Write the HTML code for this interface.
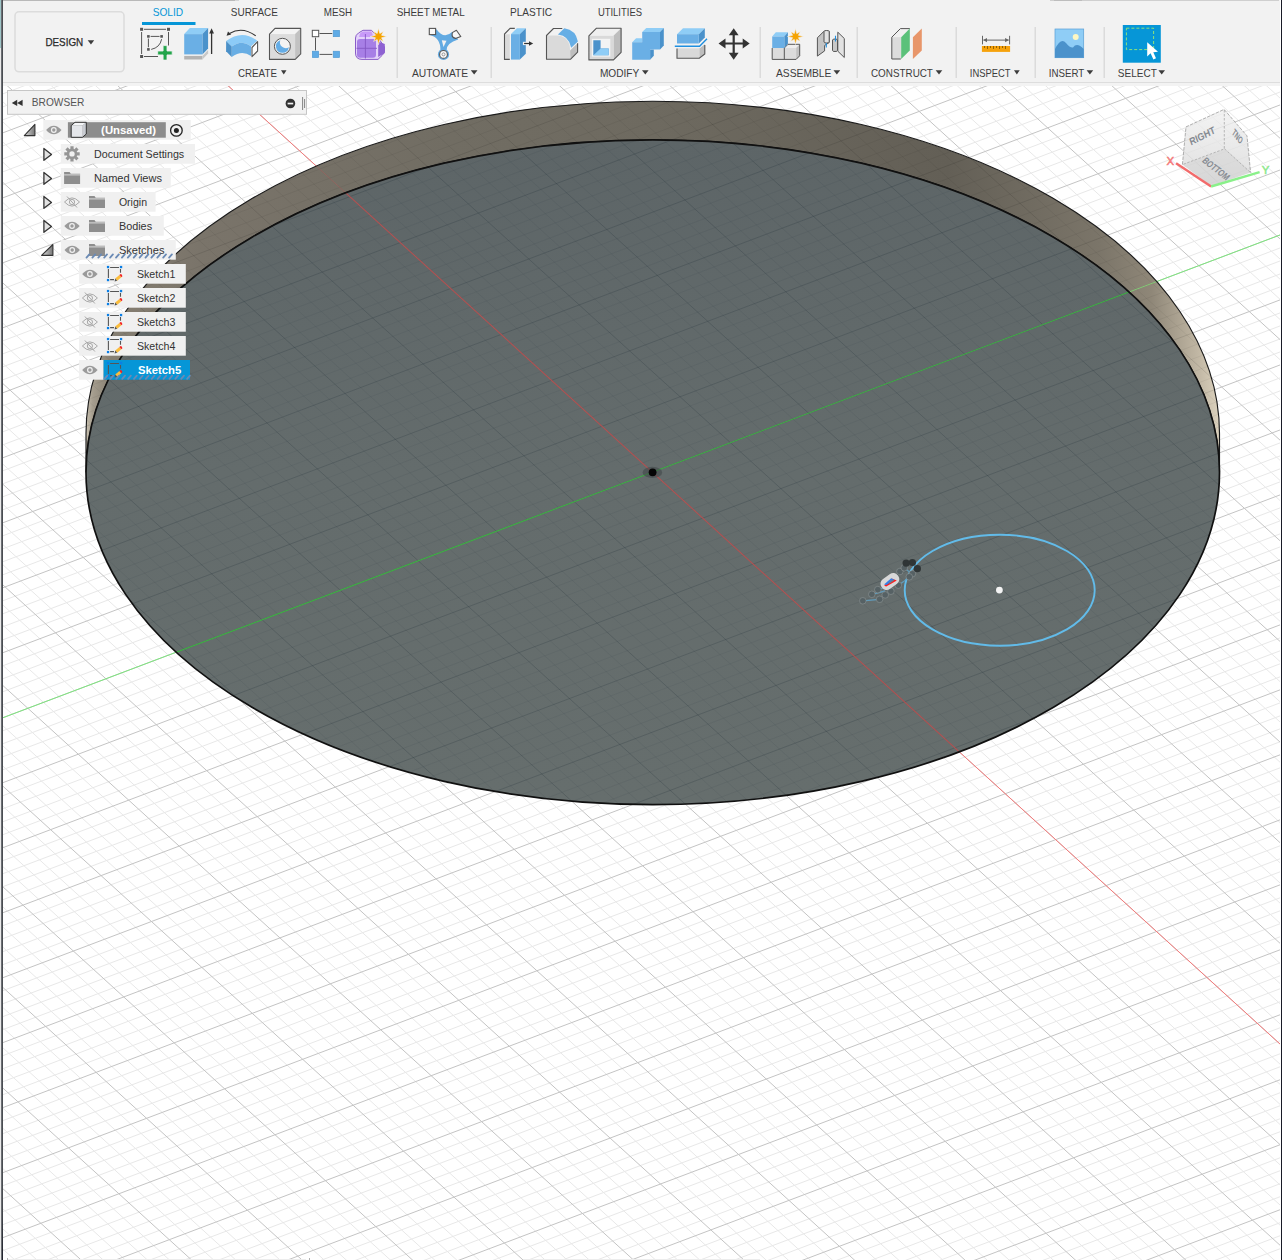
<!DOCTYPE html>
<html><head><meta charset="utf-8"><style>
html,body{margin:0;padding:0;width:1282px;height:1260px;overflow:hidden;background:#fff;}
</style></head><body>
<svg width="1282" height="1260" viewBox="0 0 1282 1260" style="position:absolute;left:0;top:0" font-family="Liberation Sans, sans-serif"><defs>
<linearGradient id="wallg" x1="86.0" y1="0" x2="1219.5" y2="0" gradientUnits="userSpaceOnUse">
<stop offset="0" stop-color="#c9c1b0"/><stop offset="0.006" stop-color="#a59d8e"/><stop offset="0.022" stop-color="#867f72"/><stop offset="0.1" stop-color="#7a746a"/><stop offset="0.32" stop-color="#716d63"/><stop offset="0.5" stop-color="#6e6a60"/><stop offset="0.76" stop-color="#635f56"/><stop offset="0.894" stop-color="#7b7569"/><stop offset="0.94" stop-color="#8f8778"/><stop offset="0.982" stop-color="#c2b8a5"/><stop offset="1" stop-color="#dcd2be"/>
</linearGradient>
<linearGradient id="faceg" x1="0" y1="139.85000000000002" x2="0" y2="804.65" gradientUnits="userSpaceOnUse">
<stop offset="0" stop-color="#5d6567"/><stop offset="0.5" stop-color="#646c6c"/><stop offset="1" stop-color="#666e6d"/>
</linearGradient>
<clipPath id="vp"><rect x="3" y="86" width="1277" height="1174"/></clipPath>
<clipPath id="facec"><ellipse cx="652.75" cy="472.25" rx="566.75" ry="332.4"/></clipPath>
<clipPath id="wallc"><path d="M86.0 472.2A566.75 332.4 0 0 1 1219.5 472.2L1219.5 433.6A566.75 332.4 0 0 0 86.0 433.6Z"/></clipPath>
</defs>
<g clip-path="url(#vp)">
<rect x="0" y="86" width="1282" height="1174" fill="#fff"/>
<path d="M-957.5 417.9L906.2 -286.6M-937.4 436.3L926.3 -268.2M-927.3 445.4L936.4 -259.0M-917.2 454.6L946.5 -249.8M-907.1 463.8L956.6 -240.7M-886.9 482.2L976.7 -222.3M-876.9 491.4L986.8 -213.1M-866.8 500.6L996.9 -203.9M-856.7 509.7L1007.0 -194.7M-836.5 528.1L1027.2 -176.4M-826.4 537.3L1037.2 -167.2M-816.4 546.5L1047.3 -158.0M-806.3 555.7L1057.4 -148.8M-786.1 574.0L1077.6 -130.4M-776.0 583.2L1087.7 -121.2M-765.9 592.4L1097.7 -112.1M-755.9 601.6L1107.8 -102.9M-735.7 620.0L1128.0 -84.5M-725.6 629.2L1138.1 -75.3M-715.5 638.3L1148.2 -66.1M-705.4 647.5L1158.2 -56.9M-685.3 665.9L1178.4 -38.6M-675.2 675.1L1188.5 -29.4M-665.1 684.3L1198.6 -20.2M-655.0 693.5L1208.7 -11.0M-634.9 711.8L1228.8 7.4M-624.8 721.0L1238.9 16.6M-614.7 730.2L1249.0 25.7M-604.6 739.4L1259.1 34.9M-584.4 757.8L1279.2 53.3M-574.4 767.0L1289.3 62.5M-564.3 776.1L1299.4 71.7M-554.2 785.3L1309.5 80.9M-534.0 803.7L1329.7 99.2M-523.9 812.9L1339.7 108.4M-513.9 822.1L1349.8 117.6M-503.8 831.3L1359.9 126.8M-483.6 849.6L1380.1 145.2M-473.5 858.8L1390.2 154.3M-463.4 868.0L1400.2 163.5M-453.4 877.2L1410.3 172.7M-433.2 895.6L1430.5 191.1M-423.1 904.7L1440.6 200.3M-413.0 913.9L1450.7 209.5M-402.9 923.1L1460.7 218.6M-382.8 941.5L1480.9 237.0M-372.7 950.7L1491.0 246.2M-362.6 959.9L1501.1 255.4M-352.5 969.0L1511.2 264.6M-332.4 987.4L1531.3 282.9M-322.3 996.6L1541.4 292.1M-312.2 1005.8L1551.5 301.3M-302.1 1015.0L1561.6 310.5M-281.9 1033.3L1581.7 328.9M-271.9 1042.5L1591.8 338.1M-261.8 1051.7L1601.9 347.2M-251.7 1060.9L1612.0 356.4M-231.5 1079.3L1632.1 374.8M-221.4 1088.5L1642.2 384.0M-211.4 1097.6L1652.3 393.2M-201.3 1106.8L1662.4 402.4M-181.1 1125.2L1682.6 420.7M-171.0 1134.4L1692.6 429.9M-160.9 1143.6L1702.7 439.1M-150.9 1152.8L1712.8 448.3M-130.7 1171.1L1733.0 466.7M-120.6 1180.3L1743.1 475.8M-110.5 1189.5L1753.1 485.0M-100.4 1198.7L1763.2 494.2M-80.3 1217.1L1783.4 512.6M-70.2 1226.2L1793.5 521.8M-60.1 1235.4L1803.6 531.0M-50.0 1244.6L1813.6 540.1M-29.9 1263.0L1833.8 558.5M-19.8 1272.2L1843.9 567.7M-9.7 1281.4L1854.0 576.9M0.4 1290.5L1864.1 586.1M20.6 1308.9L1884.2 604.4M30.6 1318.1L1894.3 613.6M40.7 1327.3L1904.4 622.8M50.8 1336.5L1914.5 632.0M71.0 1354.8L1934.6 650.4M81.1 1364.0L1944.7 659.6M91.1 1373.2L1954.8 668.7M101.2 1382.4L1964.9 677.9M121.4 1400.8L1985.1 696.3M131.5 1410.0L1995.1 705.5M141.5 1419.1L2005.2 714.7M151.6 1428.3L2015.3 723.9M171.8 1446.7L2035.5 742.2M181.9 1455.9L2045.6 751.4M192.0 1465.1L2055.6 760.6M202.0 1474.3L2065.7 769.8M222.2 1492.6L2085.9 788.2M232.3 1501.8L2096.0 797.3M242.4 1511.0L2106.1 806.5M252.5 1520.2L2116.1 815.7M272.6 1538.6L2136.3 834.1M282.7 1547.7L2146.4 843.3M292.8 1556.9L2156.5 852.5M302.9 1566.1L2166.6 861.6M323.0 1584.5L2186.7 880.0M333.1 1593.7L2196.8 889.2M343.2 1602.9L2206.9 898.4M353.3 1612.0L2217.0 907.6M373.5 1630.4L2237.1 925.9M-962.2 430.2L354.8 1630.0M-931.0 418.4L386.0 1618.2M-915.4 412.5L401.6 1612.3M-899.8 406.6L417.2 1606.4M-884.2 400.7L432.8 1600.5M-852.9 388.9L464.0 1588.7M-837.3 383.0L479.7 1582.8M-821.7 377.1L495.3 1576.9M-806.1 371.2L510.9 1571.0M-774.9 359.4L542.1 1559.2M-759.3 353.5L557.7 1553.3M-743.6 347.6L573.3 1547.4M-728.0 341.7L589.0 1541.5M-696.8 329.9L620.2 1529.7M-681.2 324.0L635.8 1523.8M-665.6 318.1L651.4 1517.9M-650.0 312.2L667.0 1512.0M-618.7 300.4L698.3 1500.2M-603.1 294.5L713.9 1494.3M-587.5 288.6L729.5 1488.3M-571.9 282.7L745.1 1482.4M-540.7 270.9L776.3 1470.6M-525.0 265.0L791.9 1464.7M-509.4 259.1L807.5 1458.8M-493.8 253.2L823.2 1452.9M-462.6 241.4L854.4 1441.1M-447.0 235.5L870.0 1435.2M-431.4 229.6L885.6 1429.3M-415.7 223.7L901.2 1423.4M-384.5 211.9L932.5 1411.6M-368.9 206.0L948.1 1405.7M-353.3 200.0L963.7 1399.8M-337.7 194.1L979.3 1393.9M-306.5 182.3L1010.5 1382.1M-290.8 176.4L1026.1 1376.2M-275.2 170.5L1041.8 1370.3M-259.6 164.6L1057.4 1364.4M-228.4 152.8L1088.6 1352.6M-212.8 146.9L1104.2 1346.7M-197.2 141.0L1119.8 1340.8M-181.5 135.1L1135.4 1334.9M-150.3 123.3L1166.7 1323.1M-134.7 117.4L1182.3 1317.2M-119.1 111.5L1197.9 1311.3M-103.5 105.6L1213.5 1305.4M-72.2 93.8L1244.7 1293.6M-56.6 87.9L1260.3 1287.7M-41.0 82.0L1276.0 1281.8M-25.4 76.1L1291.6 1275.9M5.8 64.3L1322.8 1264.1M21.4 58.4L1338.4 1258.2M37.1 52.5L1354.0 1252.3M52.7 46.6L1369.6 1246.4M83.9 34.8L1400.9 1234.6M99.5 28.9L1416.5 1228.7M115.1 23.0L1432.1 1222.8M130.7 17.1L1447.7 1216.9M162.0 5.3L1478.9 1205.1M177.6 -0.6L1494.6 1199.2M193.2 -6.5L1510.2 1193.2M208.8 -12.4L1525.8 1187.3M240.0 -24.2L1557.0 1175.5M255.6 -30.1L1572.6 1169.6M271.3 -36.0L1588.2 1163.7M286.9 -41.9L1603.9 1157.8M318.1 -53.7L1635.1 1146.0M333.7 -59.6L1650.7 1140.1M349.3 -65.5L1666.3 1134.2M364.9 -71.4L1681.9 1128.3M396.2 -83.2L1713.1 1116.5M411.8 -89.1L1728.8 1110.6M427.4 -95.1L1744.4 1104.7M443.0 -101.0L1760.0 1098.8M474.2 -112.8L1791.2 1087.0M489.8 -118.7L1806.8 1081.1M505.5 -124.6L1822.4 1075.2M521.1 -130.5L1838.1 1069.3M552.3 -142.3L1869.3 1057.5M567.9 -148.2L1884.9 1051.6M583.5 -154.1L1900.5 1045.7M599.1 -160.0L1916.1 1039.8M630.4 -171.8L1947.4 1028.0M646.0 -177.7L1963.0 1022.1M661.6 -183.6L1978.6 1016.2M677.2 -189.5L1994.2 1010.3M708.4 -201.3L2025.4 998.5M724.1 -207.2L2041.0 992.6M739.7 -213.1L2056.6 986.7M755.3 -219.0L2072.3 980.8M786.5 -230.8L2103.5 969.0M802.1 -236.7L2119.1 963.1M817.7 -242.6L2134.7 957.2M833.4 -248.5L2150.3 951.3M864.6 -260.3L2181.6 939.5M880.2 -266.2L2197.2 933.6M895.8 -272.1L2212.8 927.7M911.4 -278.0L2228.4 921.8" stroke="#e8e8e8" stroke-width="1" fill="none"/>
<path d="M-947.4 427.1L916.2 -277.4M-897.0 473.0L966.7 -231.5M-846.6 518.9L1017.1 -185.5M-796.2 564.9L1067.5 -139.6M-745.8 610.8L1117.9 -93.7M-695.4 656.7L1168.3 -47.7M-644.9 702.6L1218.7 -1.8M-594.5 748.6L1269.2 44.1M-544.1 794.5L1319.6 90.0M-493.7 840.4L1370.0 136.0M-443.3 886.4L1420.4 181.9M-392.9 932.3L1470.8 227.8M-342.4 978.2L1521.2 273.8M-292.0 1024.2L1571.7 319.7M-241.6 1070.1L1622.1 365.6M-191.2 1116.0L1672.5 411.5M-140.8 1161.9L1722.9 457.5M-90.4 1207.9L1773.3 503.4M-39.9 1253.8L1823.7 549.3M10.5 1299.7L1874.1 595.3M60.9 1345.7L1924.6 641.2M111.3 1391.6L1975.0 687.1M161.7 1437.5L2025.4 733.0M212.1 1483.4L2075.8 779.0M262.5 1529.4L2126.2 824.9M313.0 1575.3L2176.6 870.8M363.4 1621.2L2227.1 916.8M-946.6 424.3L370.4 1624.1M-868.5 394.8L448.4 1594.6M-790.5 365.3L526.5 1565.1M-712.4 335.8L604.6 1535.6M-634.3 306.3L682.6 1506.1M-556.3 276.8L760.7 1476.5M-478.2 247.3L838.8 1447.0M-400.1 217.8L916.8 1417.5M-322.1 188.2L994.9 1388.0M-244.0 158.7L1073.0 1358.5M-165.9 129.2L1151.1 1329.0M-87.9 99.7L1229.1 1299.5M-9.8 70.2L1307.2 1270.0M68.3 40.7L1385.3 1240.5M146.3 11.2L1463.3 1211.0M224.4 -18.3L1541.4 1181.4M302.5 -47.8L1619.5 1151.9M380.6 -77.3L1697.5 1122.4M458.6 -106.9L1775.6 1092.9M536.7 -136.4L1853.7 1063.4M614.8 -165.9L1931.7 1033.9M692.8 -195.4L2009.8 1004.4M770.9 -224.9L2087.9 974.9M849.0 -254.4L2165.9 945.4M927.0 -283.9L2244.0 915.9" stroke="#c4c4c4" stroke-width="1" fill="none"/>
<path d="M146.3 11.2L1463.3 1211.0" stroke="#f47a7a" stroke-width="1"/>
<path d="M-443.3 886.4L1420.4 181.9" stroke="#7ee67e" stroke-width="1"/>
<path d="M86.0 472.2A566.75 332.4 0 0 1 1219.5 472.2L1219.5 433.6A566.75 332.4 0 0 0 86.0 433.6Z" fill="url(#wallg)"/>
<g clip-path="url(#wallc)">
<path d="M-957.5 417.9L906.2 -286.6M-937.4 436.3L926.3 -268.2M-927.3 445.4L936.4 -259.0M-917.2 454.6L946.5 -249.8M-907.1 463.8L956.6 -240.7M-886.9 482.2L976.7 -222.3M-876.9 491.4L986.8 -213.1M-866.8 500.6L996.9 -203.9M-856.7 509.7L1007.0 -194.7M-836.5 528.1L1027.2 -176.4M-826.4 537.3L1037.2 -167.2M-816.4 546.5L1047.3 -158.0M-806.3 555.7L1057.4 -148.8M-786.1 574.0L1077.6 -130.4M-776.0 583.2L1087.7 -121.2M-765.9 592.4L1097.7 -112.1M-755.9 601.6L1107.8 -102.9M-735.7 620.0L1128.0 -84.5M-725.6 629.2L1138.1 -75.3M-715.5 638.3L1148.2 -66.1M-705.4 647.5L1158.2 -56.9M-685.3 665.9L1178.4 -38.6M-675.2 675.1L1188.5 -29.4M-665.1 684.3L1198.6 -20.2M-655.0 693.5L1208.7 -11.0M-634.9 711.8L1228.8 7.4M-624.8 721.0L1238.9 16.6M-614.7 730.2L1249.0 25.7M-604.6 739.4L1259.1 34.9M-584.4 757.8L1279.2 53.3M-574.4 767.0L1289.3 62.5M-564.3 776.1L1299.4 71.7M-554.2 785.3L1309.5 80.9M-534.0 803.7L1329.7 99.2M-523.9 812.9L1339.7 108.4M-513.9 822.1L1349.8 117.6M-503.8 831.3L1359.9 126.8M-483.6 849.6L1380.1 145.2M-473.5 858.8L1390.2 154.3M-463.4 868.0L1400.2 163.5M-453.4 877.2L1410.3 172.7M-433.2 895.6L1430.5 191.1M-423.1 904.7L1440.6 200.3M-413.0 913.9L1450.7 209.5M-402.9 923.1L1460.7 218.6M-382.8 941.5L1480.9 237.0M-372.7 950.7L1491.0 246.2M-362.6 959.9L1501.1 255.4M-352.5 969.0L1511.2 264.6M-332.4 987.4L1531.3 282.9M-322.3 996.6L1541.4 292.1M-312.2 1005.8L1551.5 301.3M-302.1 1015.0L1561.6 310.5M-281.9 1033.3L1581.7 328.9M-271.9 1042.5L1591.8 338.1M-261.8 1051.7L1601.9 347.2M-251.7 1060.9L1612.0 356.4M-231.5 1079.3L1632.1 374.8M-221.4 1088.5L1642.2 384.0M-211.4 1097.6L1652.3 393.2M-201.3 1106.8L1662.4 402.4M-181.1 1125.2L1682.6 420.7M-171.0 1134.4L1692.6 429.9M-160.9 1143.6L1702.7 439.1M-150.9 1152.8L1712.8 448.3M-130.7 1171.1L1733.0 466.7M-120.6 1180.3L1743.1 475.8M-110.5 1189.5L1753.1 485.0M-100.4 1198.7L1763.2 494.2M-80.3 1217.1L1783.4 512.6M-70.2 1226.2L1793.5 521.8M-60.1 1235.4L1803.6 531.0M-50.0 1244.6L1813.6 540.1M-29.9 1263.0L1833.8 558.5M-19.8 1272.2L1843.9 567.7M-9.7 1281.4L1854.0 576.9M0.4 1290.5L1864.1 586.1M20.6 1308.9L1884.2 604.4M30.6 1318.1L1894.3 613.6M40.7 1327.3L1904.4 622.8M50.8 1336.5L1914.5 632.0M71.0 1354.8L1934.6 650.4M81.1 1364.0L1944.7 659.6M91.1 1373.2L1954.8 668.7M101.2 1382.4L1964.9 677.9M121.4 1400.8L1985.1 696.3M131.5 1410.0L1995.1 705.5M141.5 1419.1L2005.2 714.7M151.6 1428.3L2015.3 723.9M171.8 1446.7L2035.5 742.2M181.9 1455.9L2045.6 751.4M192.0 1465.1L2055.6 760.6M202.0 1474.3L2065.7 769.8M222.2 1492.6L2085.9 788.2M232.3 1501.8L2096.0 797.3M242.4 1511.0L2106.1 806.5M252.5 1520.2L2116.1 815.7M272.6 1538.6L2136.3 834.1M282.7 1547.7L2146.4 843.3M292.8 1556.9L2156.5 852.5M302.9 1566.1L2166.6 861.6M323.0 1584.5L2186.7 880.0M333.1 1593.7L2196.8 889.2M343.2 1602.9L2206.9 898.4M353.3 1612.0L2217.0 907.6M373.5 1630.4L2237.1 925.9M-962.2 430.2L354.8 1630.0M-931.0 418.4L386.0 1618.2M-915.4 412.5L401.6 1612.3M-899.8 406.6L417.2 1606.4M-884.2 400.7L432.8 1600.5M-852.9 388.9L464.0 1588.7M-837.3 383.0L479.7 1582.8M-821.7 377.1L495.3 1576.9M-806.1 371.2L510.9 1571.0M-774.9 359.4L542.1 1559.2M-759.3 353.5L557.7 1553.3M-743.6 347.6L573.3 1547.4M-728.0 341.7L589.0 1541.5M-696.8 329.9L620.2 1529.7M-681.2 324.0L635.8 1523.8M-665.6 318.1L651.4 1517.9M-650.0 312.2L667.0 1512.0M-618.7 300.4L698.3 1500.2M-603.1 294.5L713.9 1494.3M-587.5 288.6L729.5 1488.3M-571.9 282.7L745.1 1482.4M-540.7 270.9L776.3 1470.6M-525.0 265.0L791.9 1464.7M-509.4 259.1L807.5 1458.8M-493.8 253.2L823.2 1452.9M-462.6 241.4L854.4 1441.1M-447.0 235.5L870.0 1435.2M-431.4 229.6L885.6 1429.3M-415.7 223.7L901.2 1423.4M-384.5 211.9L932.5 1411.6M-368.9 206.0L948.1 1405.7M-353.3 200.0L963.7 1399.8M-337.7 194.1L979.3 1393.9M-306.5 182.3L1010.5 1382.1M-290.8 176.4L1026.1 1376.2M-275.2 170.5L1041.8 1370.3M-259.6 164.6L1057.4 1364.4M-228.4 152.8L1088.6 1352.6M-212.8 146.9L1104.2 1346.7M-197.2 141.0L1119.8 1340.8M-181.5 135.1L1135.4 1334.9M-150.3 123.3L1166.7 1323.1M-134.7 117.4L1182.3 1317.2M-119.1 111.5L1197.9 1311.3M-103.5 105.6L1213.5 1305.4M-72.2 93.8L1244.7 1293.6M-56.6 87.9L1260.3 1287.7M-41.0 82.0L1276.0 1281.8M-25.4 76.1L1291.6 1275.9M5.8 64.3L1322.8 1264.1M21.4 58.4L1338.4 1258.2M37.1 52.5L1354.0 1252.3M52.7 46.6L1369.6 1246.4M83.9 34.8L1400.9 1234.6M99.5 28.9L1416.5 1228.7M115.1 23.0L1432.1 1222.8M130.7 17.1L1447.7 1216.9M162.0 5.3L1478.9 1205.1M177.6 -0.6L1494.6 1199.2M193.2 -6.5L1510.2 1193.2M208.8 -12.4L1525.8 1187.3M240.0 -24.2L1557.0 1175.5M255.6 -30.1L1572.6 1169.6M271.3 -36.0L1588.2 1163.7M286.9 -41.9L1603.9 1157.8M318.1 -53.7L1635.1 1146.0M333.7 -59.6L1650.7 1140.1M349.3 -65.5L1666.3 1134.2M364.9 -71.4L1681.9 1128.3M396.2 -83.2L1713.1 1116.5M411.8 -89.1L1728.8 1110.6M427.4 -95.1L1744.4 1104.7M443.0 -101.0L1760.0 1098.8M474.2 -112.8L1791.2 1087.0M489.8 -118.7L1806.8 1081.1M505.5 -124.6L1822.4 1075.2M521.1 -130.5L1838.1 1069.3M552.3 -142.3L1869.3 1057.5M567.9 -148.2L1884.9 1051.6M583.5 -154.1L1900.5 1045.7M599.1 -160.0L1916.1 1039.8M630.4 -171.8L1947.4 1028.0M646.0 -177.7L1963.0 1022.1M661.6 -183.6L1978.6 1016.2M677.2 -189.5L1994.2 1010.3M708.4 -201.3L2025.4 998.5M724.1 -207.2L2041.0 992.6M739.7 -213.1L2056.6 986.7M755.3 -219.0L2072.3 980.8M786.5 -230.8L2103.5 969.0M802.1 -236.7L2119.1 963.1M817.7 -242.6L2134.7 957.2M833.4 -248.5L2150.3 951.3M864.6 -260.3L2181.6 939.5M880.2 -266.2L2197.2 933.6M895.8 -272.1L2212.8 927.7M911.4 -278.0L2228.4 921.8" stroke="#000" stroke-opacity="0.05" stroke-width="1" fill="none"/>
<path d="M-947.4 427.1L916.2 -277.4M-897.0 473.0L966.7 -231.5M-846.6 518.9L1017.1 -185.5M-796.2 564.9L1067.5 -139.6M-745.8 610.8L1117.9 -93.7M-695.4 656.7L1168.3 -47.7M-644.9 702.6L1218.7 -1.8M-594.5 748.6L1269.2 44.1M-544.1 794.5L1319.6 90.0M-493.7 840.4L1370.0 136.0M-443.3 886.4L1420.4 181.9M-392.9 932.3L1470.8 227.8M-342.4 978.2L1521.2 273.8M-292.0 1024.2L1571.7 319.7M-241.6 1070.1L1622.1 365.6M-191.2 1116.0L1672.5 411.5M-140.8 1161.9L1722.9 457.5M-90.4 1207.9L1773.3 503.4M-39.9 1253.8L1823.7 549.3M10.5 1299.7L1874.1 595.3M60.9 1345.7L1924.6 641.2M111.3 1391.6L1975.0 687.1M161.7 1437.5L2025.4 733.0M212.1 1483.4L2075.8 779.0M262.5 1529.4L2126.2 824.9M313.0 1575.3L2176.6 870.8M363.4 1621.2L2227.1 916.8M-946.6 424.3L370.4 1624.1M-868.5 394.8L448.4 1594.6M-790.5 365.3L526.5 1565.1M-712.4 335.8L604.6 1535.6M-634.3 306.3L682.6 1506.1M-556.3 276.8L760.7 1476.5M-478.2 247.3L838.8 1447.0M-400.1 217.8L916.8 1417.5M-322.1 188.2L994.9 1388.0M-244.0 158.7L1073.0 1358.5M-165.9 129.2L1151.1 1329.0M-87.9 99.7L1229.1 1299.5M-9.8 70.2L1307.2 1270.0M68.3 40.7L1385.3 1240.5M146.3 11.2L1463.3 1211.0M224.4 -18.3L1541.4 1181.4M302.5 -47.8L1619.5 1151.9M380.6 -77.3L1697.5 1122.4M458.6 -106.9L1775.6 1092.9M536.7 -136.4L1853.7 1063.4M614.8 -165.9L1931.7 1033.9M692.8 -195.4L2009.8 1004.4M770.9 -224.9L2087.9 974.9M849.0 -254.4L2165.9 945.4M927.0 -283.9L2244.0 915.9" stroke="#000" stroke-opacity="0.10" stroke-width="1" fill="none"/>
<path d="M146.3 11.2L1463.3 1211.0" stroke="#e06a6a" stroke-width="1" stroke-opacity="0.35"/>
<path d="M-443.3 886.4L1420.4 181.9" stroke="#86e07a" stroke-width="1" stroke-opacity="0.8"/>
</g>
<path d="M86.0 472.2A566.75 332.4 0 0 1 1219.5 472.2L1219.5 433.6A566.75 332.4 0 0 0 86.0 433.6Z" fill="none" stroke="#1a1a1a" stroke-width="1.15"/>
<ellipse cx="652.75" cy="472.25" rx="566.75" ry="332.4" fill="url(#faceg)"/>
<g clip-path="url(#facec)">
<path d="M-957.5 417.9L906.2 -286.6M-937.4 436.3L926.3 -268.2M-927.3 445.4L936.4 -259.0M-917.2 454.6L946.5 -249.8M-907.1 463.8L956.6 -240.7M-886.9 482.2L976.7 -222.3M-876.9 491.4L986.8 -213.1M-866.8 500.6L996.9 -203.9M-856.7 509.7L1007.0 -194.7M-836.5 528.1L1027.2 -176.4M-826.4 537.3L1037.2 -167.2M-816.4 546.5L1047.3 -158.0M-806.3 555.7L1057.4 -148.8M-786.1 574.0L1077.6 -130.4M-776.0 583.2L1087.7 -121.2M-765.9 592.4L1097.7 -112.1M-755.9 601.6L1107.8 -102.9M-735.7 620.0L1128.0 -84.5M-725.6 629.2L1138.1 -75.3M-715.5 638.3L1148.2 -66.1M-705.4 647.5L1158.2 -56.9M-685.3 665.9L1178.4 -38.6M-675.2 675.1L1188.5 -29.4M-665.1 684.3L1198.6 -20.2M-655.0 693.5L1208.7 -11.0M-634.9 711.8L1228.8 7.4M-624.8 721.0L1238.9 16.6M-614.7 730.2L1249.0 25.7M-604.6 739.4L1259.1 34.9M-584.4 757.8L1279.2 53.3M-574.4 767.0L1289.3 62.5M-564.3 776.1L1299.4 71.7M-554.2 785.3L1309.5 80.9M-534.0 803.7L1329.7 99.2M-523.9 812.9L1339.7 108.4M-513.9 822.1L1349.8 117.6M-503.8 831.3L1359.9 126.8M-483.6 849.6L1380.1 145.2M-473.5 858.8L1390.2 154.3M-463.4 868.0L1400.2 163.5M-453.4 877.2L1410.3 172.7M-433.2 895.6L1430.5 191.1M-423.1 904.7L1440.6 200.3M-413.0 913.9L1450.7 209.5M-402.9 923.1L1460.7 218.6M-382.8 941.5L1480.9 237.0M-372.7 950.7L1491.0 246.2M-362.6 959.9L1501.1 255.4M-352.5 969.0L1511.2 264.6M-332.4 987.4L1531.3 282.9M-322.3 996.6L1541.4 292.1M-312.2 1005.8L1551.5 301.3M-302.1 1015.0L1561.6 310.5M-281.9 1033.3L1581.7 328.9M-271.9 1042.5L1591.8 338.1M-261.8 1051.7L1601.9 347.2M-251.7 1060.9L1612.0 356.4M-231.5 1079.3L1632.1 374.8M-221.4 1088.5L1642.2 384.0M-211.4 1097.6L1652.3 393.2M-201.3 1106.8L1662.4 402.4M-181.1 1125.2L1682.6 420.7M-171.0 1134.4L1692.6 429.9M-160.9 1143.6L1702.7 439.1M-150.9 1152.8L1712.8 448.3M-130.7 1171.1L1733.0 466.7M-120.6 1180.3L1743.1 475.8M-110.5 1189.5L1753.1 485.0M-100.4 1198.7L1763.2 494.2M-80.3 1217.1L1783.4 512.6M-70.2 1226.2L1793.5 521.8M-60.1 1235.4L1803.6 531.0M-50.0 1244.6L1813.6 540.1M-29.9 1263.0L1833.8 558.5M-19.8 1272.2L1843.9 567.7M-9.7 1281.4L1854.0 576.9M0.4 1290.5L1864.1 586.1M20.6 1308.9L1884.2 604.4M30.6 1318.1L1894.3 613.6M40.7 1327.3L1904.4 622.8M50.8 1336.5L1914.5 632.0M71.0 1354.8L1934.6 650.4M81.1 1364.0L1944.7 659.6M91.1 1373.2L1954.8 668.7M101.2 1382.4L1964.9 677.9M121.4 1400.8L1985.1 696.3M131.5 1410.0L1995.1 705.5M141.5 1419.1L2005.2 714.7M151.6 1428.3L2015.3 723.9M171.8 1446.7L2035.5 742.2M181.9 1455.9L2045.6 751.4M192.0 1465.1L2055.6 760.6M202.0 1474.3L2065.7 769.8M222.2 1492.6L2085.9 788.2M232.3 1501.8L2096.0 797.3M242.4 1511.0L2106.1 806.5M252.5 1520.2L2116.1 815.7M272.6 1538.6L2136.3 834.1M282.7 1547.7L2146.4 843.3M292.8 1556.9L2156.5 852.5M302.9 1566.1L2166.6 861.6M323.0 1584.5L2186.7 880.0M333.1 1593.7L2196.8 889.2M343.2 1602.9L2206.9 898.4M353.3 1612.0L2217.0 907.6M373.5 1630.4L2237.1 925.9M-962.2 430.2L354.8 1630.0M-931.0 418.4L386.0 1618.2M-915.4 412.5L401.6 1612.3M-899.8 406.6L417.2 1606.4M-884.2 400.7L432.8 1600.5M-852.9 388.9L464.0 1588.7M-837.3 383.0L479.7 1582.8M-821.7 377.1L495.3 1576.9M-806.1 371.2L510.9 1571.0M-774.9 359.4L542.1 1559.2M-759.3 353.5L557.7 1553.3M-743.6 347.6L573.3 1547.4M-728.0 341.7L589.0 1541.5M-696.8 329.9L620.2 1529.7M-681.2 324.0L635.8 1523.8M-665.6 318.1L651.4 1517.9M-650.0 312.2L667.0 1512.0M-618.7 300.4L698.3 1500.2M-603.1 294.5L713.9 1494.3M-587.5 288.6L729.5 1488.3M-571.9 282.7L745.1 1482.4M-540.7 270.9L776.3 1470.6M-525.0 265.0L791.9 1464.7M-509.4 259.1L807.5 1458.8M-493.8 253.2L823.2 1452.9M-462.6 241.4L854.4 1441.1M-447.0 235.5L870.0 1435.2M-431.4 229.6L885.6 1429.3M-415.7 223.7L901.2 1423.4M-384.5 211.9L932.5 1411.6M-368.9 206.0L948.1 1405.7M-353.3 200.0L963.7 1399.8M-337.7 194.1L979.3 1393.9M-306.5 182.3L1010.5 1382.1M-290.8 176.4L1026.1 1376.2M-275.2 170.5L1041.8 1370.3M-259.6 164.6L1057.4 1364.4M-228.4 152.8L1088.6 1352.6M-212.8 146.9L1104.2 1346.7M-197.2 141.0L1119.8 1340.8M-181.5 135.1L1135.4 1334.9M-150.3 123.3L1166.7 1323.1M-134.7 117.4L1182.3 1317.2M-119.1 111.5L1197.9 1311.3M-103.5 105.6L1213.5 1305.4M-72.2 93.8L1244.7 1293.6M-56.6 87.9L1260.3 1287.7M-41.0 82.0L1276.0 1281.8M-25.4 76.1L1291.6 1275.9M5.8 64.3L1322.8 1264.1M21.4 58.4L1338.4 1258.2M37.1 52.5L1354.0 1252.3M52.7 46.6L1369.6 1246.4M83.9 34.8L1400.9 1234.6M99.5 28.9L1416.5 1228.7M115.1 23.0L1432.1 1222.8M130.7 17.1L1447.7 1216.9M162.0 5.3L1478.9 1205.1M177.6 -0.6L1494.6 1199.2M193.2 -6.5L1510.2 1193.2M208.8 -12.4L1525.8 1187.3M240.0 -24.2L1557.0 1175.5M255.6 -30.1L1572.6 1169.6M271.3 -36.0L1588.2 1163.7M286.9 -41.9L1603.9 1157.8M318.1 -53.7L1635.1 1146.0M333.7 -59.6L1650.7 1140.1M349.3 -65.5L1666.3 1134.2M364.9 -71.4L1681.9 1128.3M396.2 -83.2L1713.1 1116.5M411.8 -89.1L1728.8 1110.6M427.4 -95.1L1744.4 1104.7M443.0 -101.0L1760.0 1098.8M474.2 -112.8L1791.2 1087.0M489.8 -118.7L1806.8 1081.1M505.5 -124.6L1822.4 1075.2M521.1 -130.5L1838.1 1069.3M552.3 -142.3L1869.3 1057.5M567.9 -148.2L1884.9 1051.6M583.5 -154.1L1900.5 1045.7M599.1 -160.0L1916.1 1039.8M630.4 -171.8L1947.4 1028.0M646.0 -177.7L1963.0 1022.1M661.6 -183.6L1978.6 1016.2M677.2 -189.5L1994.2 1010.3M708.4 -201.3L2025.4 998.5M724.1 -207.2L2041.0 992.6M739.7 -213.1L2056.6 986.7M755.3 -219.0L2072.3 980.8M786.5 -230.8L2103.5 969.0M802.1 -236.7L2119.1 963.1M817.7 -242.6L2134.7 957.2M833.4 -248.5L2150.3 951.3M864.6 -260.3L2181.6 939.5M880.2 -266.2L2197.2 933.6M895.8 -272.1L2212.8 927.7M911.4 -278.0L2228.4 921.8" stroke="#1c2a33" stroke-opacity="0.07" stroke-width="1" fill="none"/>
<path d="M-947.4 427.1L916.2 -277.4M-897.0 473.0L966.7 -231.5M-846.6 518.9L1017.1 -185.5M-796.2 564.9L1067.5 -139.6M-745.8 610.8L1117.9 -93.7M-695.4 656.7L1168.3 -47.7M-644.9 702.6L1218.7 -1.8M-594.5 748.6L1269.2 44.1M-544.1 794.5L1319.6 90.0M-493.7 840.4L1370.0 136.0M-443.3 886.4L1420.4 181.9M-392.9 932.3L1470.8 227.8M-342.4 978.2L1521.2 273.8M-292.0 1024.2L1571.7 319.7M-241.6 1070.1L1622.1 365.6M-191.2 1116.0L1672.5 411.5M-140.8 1161.9L1722.9 457.5M-90.4 1207.9L1773.3 503.4M-39.9 1253.8L1823.7 549.3M10.5 1299.7L1874.1 595.3M60.9 1345.7L1924.6 641.2M111.3 1391.6L1975.0 687.1M161.7 1437.5L2025.4 733.0M212.1 1483.4L2075.8 779.0M262.5 1529.4L2126.2 824.9M313.0 1575.3L2176.6 870.8M363.4 1621.2L2227.1 916.8M-946.6 424.3L370.4 1624.1M-868.5 394.8L448.4 1594.6M-790.5 365.3L526.5 1565.1M-712.4 335.8L604.6 1535.6M-634.3 306.3L682.6 1506.1M-556.3 276.8L760.7 1476.5M-478.2 247.3L838.8 1447.0M-400.1 217.8L916.8 1417.5M-322.1 188.2L994.9 1388.0M-244.0 158.7L1073.0 1358.5M-165.9 129.2L1151.1 1329.0M-87.9 99.7L1229.1 1299.5M-9.8 70.2L1307.2 1270.0M68.3 40.7L1385.3 1240.5M146.3 11.2L1463.3 1211.0M224.4 -18.3L1541.4 1181.4M302.5 -47.8L1619.5 1151.9M380.6 -77.3L1697.5 1122.4M458.6 -106.9L1775.6 1092.9M536.7 -136.4L1853.7 1063.4M614.8 -165.9L1931.7 1033.9M692.8 -195.4L2009.8 1004.4M770.9 -224.9L2087.9 974.9M849.0 -254.4L2165.9 945.4M927.0 -283.9L2244.0 915.9" stroke="#1c2a33" stroke-opacity="0.21" stroke-width="1" fill="none"/>
<path d="M146.3 11.2L1463.3 1211.0" stroke="#b35353" stroke-width="1.1"/>
<path d="M-443.3 886.4L1420.4 181.9" stroke="#3fb045" stroke-width="1.1"/>
</g>
<ellipse cx="652.75" cy="472.25" rx="566.75" ry="332.4" fill="none" stroke="#101010" stroke-width="1.7"/>
</g>
<rect x="0" y="0" width="1282" height="83" fill="#f2f2f2"/>
<rect x="0" y="82" width="1280" height="1" fill="#dddddd"/>
<rect x="0" y="83" width="1280" height="3" fill="#f3f3f3"/>
<rect x="3" y="0" width="232" height="1" fill="#b9b9b9"/><rect x="235" y="0" width="4" height="1" fill="#d6d6d6"/>
<rect x="1050" y="0" width="229" height="1" fill="#cfcfcf"/><rect x="1054" y="0" width="28" height="1" fill="#bdbdbd"/>
<rect x="15" y="11.8" width="109" height="60" rx="4" fill="#f2f2f2" stroke="#dcdcdc" stroke-width="1.6"/>
<text x="45.4" y="46" font-size="11" font-weight="400" fill="#2a2a2a" textLength="37.8" lengthAdjust="spacingAndGlyphs" stroke="#2a2a2a" stroke-width="0.25">DESIGN</text>
<path d="M87.7 40.3H94.19999999999999L90.94999999999999 44.4Z" fill="#3c3c3c"/>
<text x="152.7" y="16.2" font-size="11" font-weight="400" fill="#0696d7" textLength="30.5" lengthAdjust="spacingAndGlyphs" >SOLID</text>
<rect x="142" y="22" width="53.5" height="3" fill="#0696d7"/>
<text x="230.8" y="16.2" font-size="11" font-weight="400" fill="#3c3c3c" textLength="47.1" lengthAdjust="spacingAndGlyphs" >SURFACE</text>
<text x="323.7" y="16.2" font-size="11" font-weight="400" fill="#3c3c3c" textLength="28.4" lengthAdjust="spacingAndGlyphs" >MESH</text>
<text x="396.7" y="16.2" font-size="11" font-weight="400" fill="#3c3c3c" textLength="68.0" lengthAdjust="spacingAndGlyphs" >SHEET METAL</text>
<text x="509.9" y="16.2" font-size="11" font-weight="400" fill="#3c3c3c" textLength="42.2" lengthAdjust="spacingAndGlyphs" >PLASTIC</text>
<text x="597.9" y="16.2" font-size="11" font-weight="400" fill="#3c3c3c" textLength="44.1" lengthAdjust="spacingAndGlyphs" >UTILITIES</text>
<text x="238.0" y="76.9" font-size="11" font-weight="400" fill="#3c3c3c" textLength="38.9" lengthAdjust="spacingAndGlyphs" >CREATE</text>
<path d="M281.0 70.3H286.5L283.75 74.4Z" fill="#3c3c3c"/>
<text x="412.0" y="76.9" font-size="11" font-weight="400" fill="#3c3c3c" textLength="56.1" lengthAdjust="spacingAndGlyphs" >AUTOMATE</text>
<path d="M470.79999999999995 70.3H477.5L474.15 74.4Z" fill="#3c3c3c"/>
<text x="599.9" y="76.9" font-size="11" font-weight="400" fill="#3c3c3c" textLength="39.3" lengthAdjust="spacingAndGlyphs" >MODIFY</text>
<path d="M642.0 70.3H648.6L645.3 74.4Z" fill="#3c3c3c"/>
<text x="775.9" y="76.9" font-size="11" font-weight="400" fill="#3c3c3c" textLength="55.6" lengthAdjust="spacingAndGlyphs" >ASSEMBLE</text>
<path d="M833.5 70.3H840.2L836.85 74.4Z" fill="#3c3c3c"/>
<text x="871.0" y="76.9" font-size="11" font-weight="400" fill="#3c3c3c" textLength="61.9" lengthAdjust="spacingAndGlyphs" >CONSTRUCT</text>
<path d="M935.6999999999999 70.3H942.3000000000001L939.0 74.4Z" fill="#3c3c3c"/>
<text x="969.8" y="76.9" font-size="11" font-weight="400" fill="#3c3c3c" textLength="40.8" lengthAdjust="spacingAndGlyphs" >INSPECT</text>
<path d="M1014.0 70.3H1019.7L1016.85 74.4Z" fill="#3c3c3c"/>
<text x="1048.7" y="76.9" font-size="11" font-weight="400" fill="#3c3c3c" textLength="35.5" lengthAdjust="spacingAndGlyphs" >INSERT</text>
<path d="M1086.6000000000001 70.3H1093.1999999999998L1089.9 74.4Z" fill="#3c3c3c"/>
<text x="1117.8" y="76.9" font-size="11" font-weight="400" fill="#3c3c3c" textLength="39.0" lengthAdjust="spacingAndGlyphs" >SELECT</text>
<path d="M1158.4 70.3H1165.0L1161.7 74.4Z" fill="#3c3c3c"/>
<rect x="396.5" y="27" width="1.4" height="51" fill="#d9d9d9"/>
<rect x="490.5" y="27" width="1.4" height="51" fill="#d9d9d9"/>
<rect x="759.5" y="27" width="1.4" height="51" fill="#d9d9d9"/>
<rect x="856.5" y="27" width="1.4" height="51" fill="#d9d9d9"/>
<rect x="955.5" y="27" width="1.4" height="51" fill="#d9d9d9"/>
<rect x="1034.5" y="27" width="1.4" height="51" fill="#d9d9d9"/>
<rect x="1103.5" y="27" width="1.4" height="51" fill="#d9d9d9"/>
<rect x="140.1" y="27.8" width="3" height="3" fill="#555"/><rect x="167.0" y="27.8" width="3" height="3" fill="#555"/><rect x="140.1" y="55.0" width="3" height="3" fill="#555"/><rect x="147.1" y="35.1" width="2.6" height="2.6" fill="#555"/><rect x="160.29999999999998" y="35.1" width="2.6" height="2.6" fill="#555"/><rect x="147.1" y="48.1" width="2.6" height="2.6" fill="#555"/><path d="M144 29.3H166M141.6 32V54M144 56.5H158M168.5 32V45.5M150.6 36.4H159.5M148.4 38.6V47.2M161.6 39.2Q160 47.5 151.2 49.4" stroke="#555" stroke-width="1" fill="none"/><path d="M163.1 45.6h3.9v5.4h5.2v3.9h-5.2v5.2h-3.9v-5.2h-5.4v-3.9h5.4z" fill="#23a54b" stroke="#f2f2f2" stroke-width="0.8"/><path d="M184.2 34.1L189.9 28.1L208.1 28.1L202.4 34.1Z" fill="#8fcdf6"/><path d="M202.4 34.1L208.1 28.1L208.1 48.4L202.4 54.4Z" fill="#4b92cb"/><path d="M184.2 34.1L202.4 34.1L202.4 54.4L184.2 54.4Z" fill="#6aafe5"/><path d="M184.2 55.9L202.4 55.9L202.4 59.5L184.2 59.5Z" fill="#b3b3b3"/><path d="M202.4 55.9L208.1 50.0L208.1 53.6L202.4 59.5Z" fill="#c8c8c8"/><path d="M211.6 54V32" stroke="#333" stroke-width="1.3"/><path d="M209.2 33.5L211.6 28.3L214 33.5Z" fill="#333"/><path d="M226.1 41Q242 29 257.3 40.7L251 46.3Q242 39 231.7 46.6Z" fill="#8ccbf7"/><path d="M231.7 46.6Q242 39 251 46.3L251 56Q242 49.5 231.7 56.9Z" fill="#69aee4"/><path d="M226.1 41L231.7 46.6V56.9L226.1 51.3Z" fill="#4a90c8"/><path d="M252 47.5L257.6 41.6V51L252 56.6Z" fill="#fff" stroke="#555" stroke-width="1.1" stroke-linejoin="round"/><path d="M255.7 35.7Q242 26 229.5 33.5" stroke="#333" stroke-width="1.1" fill="none"/><path d="M226.6 35.8L228 31.6L231.2 34.4Z" fill="#333"/><path d="M270.1 34.1L275.1 29.1L300.1 29.1L295.1 34.1Z" fill="#f4f4f4"/><path d="M270.1 34.1L295.1 34.1L295.1 58.9L270.1 58.9Z" fill="#dcdcdc"/><path d="M295.1 34.1L300.1 29.1L300.1 53.7L295.1 58.9Z" fill="#c2c2c2"/><path d="M269.5 34.1L275.0 28.4L300.7 28.4L300.7 53.9L295.2 59.4L269.5 59.4Z" fill="none" stroke="#555" stroke-width="1.1" stroke-linejoin="round"/><circle cx="282.4" cy="46.3" r="8" fill="#f4f4f4" stroke="#555" stroke-width="1"/><path d="M280.3 40.2A6.5 6.5 0 1 0 288.9 47.3A5.9 5.9 0 0 1 280.3 40.2Z" fill="#65ade6"/><path d="M319.5 33.5H332.3M315.5 37.6V50.4M319.5 54.4H332.3" stroke="#555" stroke-width="1"/><rect x="312.3" y="30.3" width="6.4" height="6.4" fill="#fff" stroke="#555" stroke-width="1"/><rect x="333.2" y="30.3" width="6.4" height="6.4" fill="#5fabe6" stroke="#4a95d0" stroke-width="0.6"/><rect x="312.3" y="51.2" width="6.4" height="6.4" fill="#5fabe6" stroke="#4a95d0" stroke-width="0.6"/><rect x="333.2" y="51.2" width="6.4" height="6.4" fill="#5fabe6" stroke="#4a95d0" stroke-width="0.6"/><path d="M363 30.3H371.5Q374 33 377 36L384.5 47V51Q384.5 53 382 55.5L378 59.4H362Q355.5 59.4 355.5 53V38Q355.5 35 358.5 33Z" fill="#e4d3fa" stroke="#8a5cc8" stroke-width="1"/><path d="M360 33.5Q362 31.5 364 31.5H371.5L373.5 37H359Z" fill="#c89af8"/><rect x="357" y="39.1" width="19" height="18.7" rx="3" fill="#a77fe6"/><path d="M378.2 41.5L384.8 44V53L378.2 57Z" fill="#8e62d2"/><path d="M365.4 34V58.5M356.5 48.3H377" stroke="#8558c4" stroke-width="0.9"/><path d="M378.5 28.3L379.8 33.5L383.4 31.6L381.5 35.2L386.7 36.5L381.5 37.8L383.4 41.4L379.8 39.5L378.5 44.7L377.2 39.5L373.6 41.4L375.5 37.8L370.3 36.5L375.5 35.2L373.6 31.6L377.2 33.5Z" fill="#f5a300" stroke="#f2f2f2" stroke-width="0.6" stroke-linejoin="round"/><path d="M430.2 35.2Q440.5 37.5 440.5 50.5L446.5 50.5Q446.5 43 458.2 39.6L452.3 31.8Q444 40 436.5 29.3Z" fill="#62aae2"/><circle cx="443.5" cy="54.4" r="5.6" fill="#62aae2"/><path d="M441.8 40.2L446.5 40.8L443.5 47.1Z" fill="#f2f2f2"/><rect x="429.3" y="28.4" width="6.3" height="6.2" fill="#f8f8f8" stroke="#555" stroke-width="1.1"/><path d="M456.4 30.2L460.8 36.5L455.5 38.4Q452 37.5 452.1 35.2Q452 33 452.7 32.4Z" fill="#f8f8f8" stroke="#555" stroke-width="1.1" stroke-linejoin="round"/><circle cx="443.5" cy="54.4" r="3.9" fill="#f8f8f8" stroke="#555" stroke-width="1.1"/><circle cx="443.5" cy="54.4" r="1.5" fill="none" stroke="#777" stroke-width="0.7"/><path d="M505.1 34.3L510.3 29.0L514.8 29.0L509.8 34.3Z" fill="#f2f2f2"/><rect x="505.1" y="34.3" width="4.7" height="24.8" fill="#dadada"/><path d="M514.8 28.4H510.1L504.5 34V59.4H509.8" fill="none" stroke="#555" stroke-width="1.1"/><path d="M511.0 34.1L516.9 28.2L525.8 28.2L519.9 34.1Z" fill="#8fcdf6"/><path d="M519.9 34.1L525.8 28.2L525.8 53.7L519.9 59.6Z" fill="#4b92cb"/><path d="M511.0 34.1L519.9 34.1L519.9 59.6L511.0 59.6Z" fill="#6aafe5"/><rect x="522.9" y="41.8" width="3" height="3.3" fill="#f2f2f2"/><path d="M524.1 43.5H530" stroke="#333" stroke-width="1.2"/><path d="M529 41.2L533.2 43.5L529 45.8Z" fill="#333"/><path d="M546.5 35.5L553.5 28.5H564.3L557.9 34.6Z" fill="#f2f2f2"/><path d="M546.5 35.5H557.9Q570 37 570.1 50.5V59.3H546.5Z" fill="#dadada"/><path d="M570.1 50.5L577.6 43.3V52.1L570.4 59.3Z" fill="#bebebe"/><path d="M557.9 34.6L564.3 28.2Q576 30 577.9 41.6L571.2 47.7Q569 36 557.9 34.6Z" fill="#66aee5"/><path d="M562.3 28.5H553.5L546.5 35.5V59.3H570.4L577.6 52.1V43.3" fill="none" stroke="#555" stroke-width="1.1" stroke-linejoin="round"/><path d="M588.9 35.8L596.5 28.2L621.1 28.2L613.5 35.8Z" fill="#efefef"/><path d="M613.5 35.8L621.1 28.2L621.1 52.3L613.5 59.9Z" fill="#bdbdbd"/><path d="M588.9 35.8L613.5 35.8L613.5 59.9L588.9 59.9Z" fill="#d9d9d9"/><path d="M588.9 35.8L596.5 28.2L621.1 28.2L621.1 52.3L613.5 59.9L588.9 59.9Z" fill="none" stroke="#555555" stroke-width="1.1" stroke-linejoin="round"/><rect x="591.8" y="38.8" width="18.5" height="17.8" fill="#f4f4f4"/><path d="M593.3 40.3H600.6V48.4H608.7V55.3H593.3Z" fill="#4b92cb"/><path d="M593.3 55.3L600.6 48.4H608.7V55.3Z" fill="#8fcdf6"/><path d="M642.2 32.1L646.3 28.1L663.8 28.1L660.0 32.1Z" fill="#8fcdf6"/><path d="M632.2 42.2L636.1 38.3L642.2 38.3L642.2 42.2Z" fill="#8fcdf6"/><path d="M660.0 32.1L663.8 28.1L663.8 45.5L660.0 49.4Z" fill="#4b92cb"/><path d="M650.1 49.4L653.8 49.4L653.8 55.8L650.1 59.7Z" fill="#4b92cb"/><path d="M632.2 42.2L642.2 42.2L642.2 32.1L660.0 32.1L660.0 49.4L650.1 49.4L650.1 59.7L632.2 59.7Z" fill="#6aafe5"/><path d="M677.0 34.2L683.0 28.2L704.8 28.2L698.8 34.2Z" fill="#8fcdf6"/><path d="M698.8 34.2L704.8 28.2L704.8 37.5L698.8 43.5Z" fill="#4b92cb"/><path d="M677.0 34.2L698.8 34.2L698.8 43.5L677.0 43.5Z" fill="#6aafe5"/><path d="M677.0 48.4L682.5 44.2L704.8 44.2L699.3 48.4Z" fill="#efefef"/><path d="M699.3 48.4L704.8 44.2L704.8 54.0L699.3 58.2Z" fill="#bdbdbd"/><path d="M677.0 48.4L699.3 48.4L699.3 58.2L677.0 58.2Z" fill="#d9d9d9"/><path d="M677 48.4V58.2H699.3L704.8 54V45" fill="none" stroke="#555" stroke-width="1.1"/><path d="M674.8 46.3H699.6L707 38.8" stroke="#f2f2f2" stroke-width="3" fill="none"/><path d="M674.8 46.3H699.6L707 38.8" stroke="#1f8fe0" stroke-width="1.4" fill="none"/><path d="M733.7 33V54M723.5 43.5H744" stroke="#333" stroke-width="2.2"/><path d="M733.7 28.3L738.6 35.3H728.8ZM733.7 59.8L738.6 52.8H728.8ZM718.5 43.5L725.5 38.6V48.4ZM749.7 43.5L742.7 38.6V48.4Z" fill="#333"/><path d="M784.3 48.0L788.0 44.3L799.7 44.3L796.1 48.0Z" fill="#eeeeee"/><path d="M796.1 48.0L799.7 44.3L799.7 55.8L796.1 59.4Z" fill="#c2c2c2"/><path d="M772.2 48.0L796.1 48.0L796.1 59.4L772.2 59.4Z" fill="#dcdcdc"/><path d="M772.2 48V59.4H796.1L799.7 55.8V44.3H788L784.3 48V59.4" fill="none" stroke="#555" stroke-width="1" stroke-linejoin="round"/><path d="M772.2 36.5L775.8 32.2L787.9 32.2L784.3 36.5Z" fill="#8fcdf6"/><path d="M784.3 36.5L787.9 32.2L787.9 43.7L784.3 48.0Z" fill="#4b92cb"/><path d="M772.2 36.5L784.3 36.5L784.3 48.0L772.2 48.0Z" fill="#6aafe5"/><path d="M795.5 28.5L796.7 33.6L800.2 31.8L798.4 35.3L803.5 36.5L798.4 37.7L800.2 41.2L796.7 39.4L795.5 44.5L794.3 39.4L790.8 41.2L792.6 37.7L787.5 36.5L792.6 35.3L790.8 31.8L794.3 33.6Z" fill="#f5a300" stroke="#f2f2f2" stroke-width="0.6" stroke-linejoin="round"/><path d="M817.4 37.8L824 31.2H829.2V42.5L824.6 45.5V50.9L817.4 56.1Z" fill="#c4c4c4" stroke="#555" stroke-width="1" stroke-linejoin="round"/><path d="M824 31.6Q824 30.5 826.6 30.5Q829.2 30.5 829.2 31.6V42Q829.2 43 826.6 43Q824 43 824 42Z" fill="#e2e2e2" stroke="#555" stroke-width="1"/><path d="M837.8 32.2L844.3 38.5V57.5L837.8 51.2Z" fill="#e2e2e2" stroke="#555" stroke-width="1" stroke-linejoin="round"/><path d="M832.5 40Q832.5 39 835 39Q837.5 39 837.5 40V50.5Q837.5 51.5 835 51.5Q832.5 51.5 832.5 50.5Z" fill="#c8c8c8" stroke="#555" stroke-width="1"/><path d="M826.3 43V47.6M835.5 35.8V41.4" stroke="#1f8fe0" stroke-width="1.1"/><path d="M891.8 37.2L900.4 28.6L909.8 28.6L901.2 37.2Z" fill="#f0f0f0"/><path d="M891.8 37.2L901.2 37.2L901.2 59.0L891.8 59.0Z" fill="#dcdcdc"/><path d="M900.8 59H891.8V37.2L900.4 28.6H909.8" fill="none" stroke="#555" stroke-width="1"/><path d="M901.2 37.2L909.8 28.6L909.8 50.4L901.2 59.0Z" fill="#5bc17a"/><path d="M912.9 37.2L921.8 28.6L921.8 50.4L912.9 59.0Z" fill="#e8966a"/><path d="M982.5 35.8V44.4M1009.6 35.8V44.4M983.5 40.1H1008.6" stroke="#666" stroke-width="1"/><path d="M983.2 40.1L987 38V42.2ZM1008.9 40.1L1005.1 38V42.2Z" fill="#666"/><rect x="981.9" y="46" width="28.2" height="5.9" fill="#f6a20c"/><path d="M984.5 46V48M987.5 46V49M990.5 46V48M993.5 46V49M996.5 46V48M999.5 46V49M1002.5 46V48M1005.5 46V49" stroke="#7a5200" stroke-width="0.8"/><rect x="1055" y="29" width="28.7" height="28.7" fill="#8fcdf6" stroke="#5aa0d6" stroke-width="0.7"/><path d="M1055 49Q1061 37 1066 43Q1070 48 1073 47.5Q1077 42 1083.7 49V57.7H1055Z" fill="#4b92cb"/><circle cx="1075.7" cy="37" r="3" fill="#fdf7c3"/><rect x="1122.8" y="25" width="38" height="37.7" fill="#0696d7"/><rect x="1126.4" y="28.2" width="27.2" height="21.4" fill="none" stroke="#8fe37a" stroke-width="1" stroke-dasharray="3 2"/><path d="M1147.2 42.2V56.5L1150.6 53.3L1153.4 59.5L1156 58.3L1153.3 52.2L1158 51.8Z" fill="#fff"/>
<rect x="7.5" y="90.5" width="299" height="23.8" fill="#f2f2f2" stroke="#c6c6c6" stroke-width="1"/><path d="M17.2 99.8L11.8 102.9L17.2 106ZM22.6 99.8L17.2 102.9L22.6 106Z" fill="#333"/><text x="31.8" y="106.2" font-size="11" font-weight="400" fill="#555" textLength="52.5" lengthAdjust="spacingAndGlyphs" >BROWSER</text><circle cx="290.4" cy="103.5" r="4.8" fill="#333"/><rect x="287.6" y="102.7" width="5.6" height="1.7" fill="#f2f2f2"/><path d="M302.6 97V110M304.6 99V108" stroke="#777" stroke-width="0.9"/><rect x="43.3" y="120" width="147.39999999999998" height="19.7" fill="#f0f0f0"/><defs><linearGradient id="tg124" x1="0" y1="0" x2="1" y2="0"><stop offset="0" stop-color="#ddd"/><stop offset="1" stop-color="#777"/></linearGradient></defs><path d="M24.3 135.6L34.9 135.6L34.9 124.3Z" fill="url(#tg124)" stroke="#333" stroke-width="1.1" stroke-linejoin="round"/><path d="M46.099999999999994 130Q53.8 121.4 61.5 130Q53.8 138.6 46.099999999999994 130Z" fill="#9a9a9a"/><circle cx="53.8" cy="130" r="2.9" fill="#f0f0f0"/><circle cx="53.8" cy="130" r="1.7" fill="#9a9a9a"/><rect x="67.9" y="122.2" width="97.9" height="15.5" fill="#8c8c8c"/><path d="M71.2 125.6L75.0 122.3L86.3 122.3L82.5 125.6Z" fill="#f4f5f7"/><path d="M82.5 125.6L86.3 122.3L86.3 134.0L82.5 137.3Z" fill="#c9ccd2"/><path d="M71.2 125.6L82.5 125.6L82.5 137.3L71.2 137.3Z" fill="#e4e6ea"/><path d="M71.2 125.6L75.0 122.3L86.3 122.3L86.3 134.0L82.5 137.3L71.2 137.3Z" fill="none" stroke="#333" stroke-width="1" stroke-linejoin="round"/><text x="101.1" y="133.9" font-size="11" font-weight="700" fill="#ffffff" textLength="55.0" lengthAdjust="spacingAndGlyphs" >(Unsaved)</text><circle cx="176.4" cy="130.4" r="5.8" fill="#f0f0f0" stroke="#222" stroke-width="1.3"/><circle cx="176.4" cy="130.4" r="2.5" fill="#222"/><rect x="60.8" y="144" width="134.2" height="19.7" fill="#f0f0f0"/><path d="M43.9 148.4L51.5 154.4L43.9 160.3Z" fill="#e2e2e2" stroke="#333" stroke-width="1.3" stroke-linejoin="round"/><path d="M77.1 152.3L79.7 152.3L79.7 155.5L77.1 155.5L76.7 156.4L78.6 158.2L76.3 160.5L74.5 158.6L73.6 159.0L73.6 161.6L70.4 161.6L70.4 159.0L69.5 158.6L67.7 160.5L65.4 158.2L67.3 156.4L66.9 155.5L64.3 155.5L64.3 152.3L66.9 152.3L67.3 151.4L65.4 149.6L67.7 147.3L69.5 149.2L70.4 148.8L70.4 146.2L73.6 146.2L73.6 148.8L74.5 149.2L76.3 147.3L78.6 149.6L76.7 151.4Z" fill="#959595"/><circle cx="72" cy="153.9" r="2.7" fill="#f0f0f0"/><text x="94.0" y="157.9" font-size="11" font-weight="400" fill="#333" textLength="90.2" lengthAdjust="spacingAndGlyphs" >Document Settings</text><rect x="60.8" y="168" width="110.00000000000001" height="19.7" fill="#f0f0f0"/><path d="M43.9 172.4L51.5 178.4L43.9 184.3Z" fill="#e2e2e2" stroke="#333" stroke-width="1.3" stroke-linejoin="round"/><path d="M64.1 172.1h5.5l1.2 1.6h9.3v10.4h-16z" fill="#8e8e8e"/><path d="M64.1 174.9h16" stroke="#f0f0f0" stroke-width="0.8"/><text x="94.0" y="181.9" font-size="11" font-weight="400" fill="#333" textLength="68.0" lengthAdjust="spacingAndGlyphs" >Named Views</text><rect x="60.8" y="192" width="94.8" height="19.7" fill="#f0f0f0"/><path d="M43.9 196.4L51.5 202.4L43.9 208.3Z" fill="#e2e2e2" stroke="#333" stroke-width="1.3" stroke-linejoin="round"/><path d="M64.5 202Q72 193.8 79.5 202Q72 210.2 64.5 202Z" fill="none" stroke="#a8a8a8" stroke-width="1"/><circle cx="72" cy="202" r="2.6" fill="none" stroke="#a8a8a8" stroke-width="1"/><path d="M67 196.5L77 207.5" stroke="#a8a8a8" stroke-width="1"/><path d="M89 196.1h5.5l1.2 1.6h9.3v10.4h-16z" fill="#8e8e8e"/><path d="M89 198.9h16" stroke="#f0f0f0" stroke-width="0.8"/><text x="118.9" y="205.9" font-size="11" font-weight="400" fill="#333" textLength="28.1" lengthAdjust="spacingAndGlyphs" >Origin</text><rect x="60.8" y="216" width="103.00000000000001" height="19.7" fill="#f0f0f0"/><path d="M43.9 220.4L51.5 226.4L43.9 232.3Z" fill="#e2e2e2" stroke="#333" stroke-width="1.3" stroke-linejoin="round"/><path d="M64.3 226Q72 217.4 79.7 226Q72 234.6 64.3 226Z" fill="#9a9a9a"/><circle cx="72" cy="226" r="2.9" fill="#f0f0f0"/><circle cx="72" cy="226" r="1.7" fill="#9a9a9a"/><path d="M89 220.1h5.5l1.2 1.6h9.3v10.4h-16z" fill="#8e8e8e"/><path d="M89 222.9h16" stroke="#f0f0f0" stroke-width="0.8"/><text x="118.9" y="229.9" font-size="11" font-weight="400" fill="#333" textLength="33.2" lengthAdjust="spacingAndGlyphs" >Bodies</text><rect x="61" y="240" width="114.80000000000001" height="19.7" fill="#f0f0f0"/><defs><linearGradient id="tg244" x1="0" y1="0" x2="1" y2="0"><stop offset="0" stop-color="#ddd"/><stop offset="1" stop-color="#777"/></linearGradient></defs><path d="M41.6 255.4L52.9 255.4L52.9 244.5Z" fill="url(#tg244)" stroke="#333" stroke-width="1.1" stroke-linejoin="round"/><path d="M64.5 250Q72.2 241.4 79.9 250Q72.2 258.6 64.5 250Z" fill="#9a9a9a"/><circle cx="72.2" cy="250" r="2.9" fill="#f0f0f0"/><circle cx="72.2" cy="250" r="1.7" fill="#9a9a9a"/><path d="M89 244.1h5.5l1.2 1.6h9.3v10.4h-16z" fill="#8e8e8e"/><path d="M89 246.9h16" stroke="#f0f0f0" stroke-width="0.8"/><text x="118.9" y="253.9" font-size="11" font-weight="400" fill="#333" textLength="45.6" lengthAdjust="spacingAndGlyphs" >Sketches</text><path d="M86.5 257.6L89.3 254.40000000000003M92.4 257.6L95.2 254.40000000000003M98.3 257.6L101.1 254.40000000000003M104.2 257.6L107.0 254.40000000000003M110.1 257.6L112.9 254.40000000000003M116.0 257.6L118.8 254.40000000000003M121.9 257.6L124.7 254.40000000000003M127.8 257.6L130.6 254.40000000000003M133.7 257.6L136.5 254.40000000000003M139.6 257.6L142.4 254.40000000000003M145.5 257.6L148.3 254.40000000000003M151.4 257.6L154.2 254.40000000000003M157.3 257.6L160.1 254.40000000000003M163.2 257.6L166.0 254.40000000000003M169.1 257.6L171.9 254.40000000000003" stroke="#6a8ab5" stroke-width="1.8" stroke-linecap="round"/><rect x="79.1" y="264" width="106.70000000000002" height="19.7" fill="#f0f0f0"/><path d="M82.2 274Q89.9 265.4 97.60000000000001 274Q89.9 282.6 82.2 274Z" fill="#9a9a9a"/><circle cx="89.9" cy="274" r="2.9" fill="#f0f0f0"/><circle cx="89.9" cy="274" r="1.7" fill="#9a9a9a"/><path d="M110.1 267.5H119M108.4 269V278M110.1 279.6H114M120.5 269V272.8" stroke="#555" stroke-width="1.1" fill="none"/><rect x="106.9" y="265.9" width="2.3" height="2.3" fill="#0a7fe6"/><rect x="119.9" y="265.9" width="2.3" height="2.3" fill="#0a7fe6"/><rect x="106.9" y="278.9" width="2.3" height="2.3" fill="#0a7fe6"/><path d="M115.2 278.6L119.4 275L121.4 277.2L117.2 280.8Z" fill="#fbbd3c"/><path d="M119.4 275L120.5 274Q122 274 122.4 276.2L121.4 277.2Z" fill="#f42424"/><path d="M115.2 278.6L117.2 280.8L114.6 281.4Z" fill="#555"/><text x="136.9" y="277.9" font-size="11" font-weight="400" fill="#333" textLength="38.4" lengthAdjust="spacingAndGlyphs" >Sketch1</text><rect x="79.1" y="288" width="106.70000000000002" height="19.7" fill="#f0f0f0"/><path d="M82.4 298Q89.9 289.8 97.4 298Q89.9 306.2 82.4 298Z" fill="none" stroke="#a8a8a8" stroke-width="1"/><circle cx="89.9" cy="298" r="2.6" fill="none" stroke="#a8a8a8" stroke-width="1"/><path d="M84.9 292.5L94.9 303.5" stroke="#a8a8a8" stroke-width="1"/><path d="M110.1 291.5H119M108.4 293V302M110.1 303.6H114M120.5 293V296.8" stroke="#555" stroke-width="1.1" fill="none"/><rect x="106.9" y="289.9" width="2.3" height="2.3" fill="#0a7fe6"/><rect x="119.9" y="289.9" width="2.3" height="2.3" fill="#0a7fe6"/><rect x="106.9" y="302.9" width="2.3" height="2.3" fill="#0a7fe6"/><path d="M115.2 302.6L119.4 299L121.4 301.2L117.2 304.8Z" fill="#fbbd3c"/><path d="M119.4 299L120.5 298Q122 298 122.4 300.2L121.4 301.2Z" fill="#f42424"/><path d="M115.2 302.6L117.2 304.8L114.6 305.4Z" fill="#555"/><text x="136.9" y="301.9" font-size="11" font-weight="400" fill="#333" textLength="38.4" lengthAdjust="spacingAndGlyphs" >Sketch2</text><rect x="79.1" y="312" width="106.70000000000002" height="19.7" fill="#f0f0f0"/><path d="M82.4 322Q89.9 313.8 97.4 322Q89.9 330.2 82.4 322Z" fill="none" stroke="#a8a8a8" stroke-width="1"/><circle cx="89.9" cy="322" r="2.6" fill="none" stroke="#a8a8a8" stroke-width="1"/><path d="M84.9 316.5L94.9 327.5" stroke="#a8a8a8" stroke-width="1"/><path d="M110.1 315.5H119M108.4 317V326M110.1 327.6H114M120.5 317V320.8" stroke="#555" stroke-width="1.1" fill="none"/><rect x="106.9" y="313.9" width="2.3" height="2.3" fill="#0a7fe6"/><rect x="119.9" y="313.9" width="2.3" height="2.3" fill="#0a7fe6"/><rect x="106.9" y="326.9" width="2.3" height="2.3" fill="#0a7fe6"/><path d="M115.2 326.6L119.4 323L121.4 325.2L117.2 328.8Z" fill="#fbbd3c"/><path d="M119.4 323L120.5 322Q122 322 122.4 324.2L121.4 325.2Z" fill="#f42424"/><path d="M115.2 326.6L117.2 328.8L114.6 329.4Z" fill="#555"/><text x="136.9" y="325.9" font-size="11" font-weight="400" fill="#333" textLength="38.4" lengthAdjust="spacingAndGlyphs" >Sketch3</text><rect x="79.1" y="336" width="106.70000000000002" height="19.7" fill="#f0f0f0"/><path d="M82.4 346Q89.9 337.8 97.4 346Q89.9 354.2 82.4 346Z" fill="none" stroke="#a8a8a8" stroke-width="1"/><circle cx="89.9" cy="346" r="2.6" fill="none" stroke="#a8a8a8" stroke-width="1"/><path d="M84.9 340.5L94.9 351.5" stroke="#a8a8a8" stroke-width="1"/><path d="M110.1 339.5H119M108.4 341V350M110.1 351.6H114M120.5 341V344.8" stroke="#555" stroke-width="1.1" fill="none"/><rect x="106.9" y="337.9" width="2.3" height="2.3" fill="#0a7fe6"/><rect x="119.9" y="337.9" width="2.3" height="2.3" fill="#0a7fe6"/><rect x="106.9" y="350.9" width="2.3" height="2.3" fill="#0a7fe6"/><path d="M115.2 350.6L119.4 347L121.4 349.2L117.2 352.8Z" fill="#fbbd3c"/><path d="M119.4 347L120.5 346Q122 346 122.4 348.2L121.4 349.2Z" fill="#f42424"/><path d="M115.2 350.6L117.2 352.8L114.6 353.4Z" fill="#555"/><text x="136.9" y="349.9" font-size="11" font-weight="400" fill="#333" textLength="38.4" lengthAdjust="spacingAndGlyphs" >Sketch4</text><rect x="79.1" y="360" width="24.5" height="19.7" fill="#f0f0f0"/><path d="M82.2 370Q89.9 361.4 97.60000000000001 370Q89.9 378.6 82.2 370Z" fill="#9a9a9a"/><circle cx="89.9" cy="370" r="2.9" fill="#f0f0f0"/><circle cx="89.9" cy="370" r="1.7" fill="#9a9a9a"/><rect x="103.6" y="360" width="86.4" height="19.7" fill="#0696d7"/><path d="M110.1 363.5H119M108.4 365V374M110.1 375.6H114M120.5 365V368.8" stroke="#555" stroke-width="1.1" fill="none"/><rect x="106.9" y="361.9" width="2.3" height="2.3" fill="#0a7fe6"/><rect x="119.9" y="361.9" width="2.3" height="2.3" fill="#0a7fe6"/><rect x="106.9" y="374.9" width="2.3" height="2.3" fill="#0a7fe6"/><path d="M115.2 374.6L119.4 371L121.4 373.2L117.2 376.8Z" fill="#fbbd3c"/><path d="M119.4 371L120.5 370Q122 370 122.4 372.2L121.4 373.2Z" fill="#f42424"/><path d="M115.2 374.6L117.2 376.8L114.6 377.4Z" fill="#555"/><path d="M104.5 378.8L107.3 375.6M110.4 378.8L113.2 375.6M116.3 378.8L119.1 375.6M122.2 378.8L125.0 375.6M128.1 378.8L130.9 375.6M134.0 378.8L136.8 375.6M139.9 378.8L142.7 375.6M145.8 378.8L148.6 375.6M151.7 378.8L154.5 375.6M157.6 378.8L160.4 375.6M163.5 378.8L166.3 375.6M169.4 378.8L172.2 375.6M175.3 378.8L178.1 375.6M181.2 378.8L184.0 375.6M187.1 378.8L189.9 375.6" stroke="#6a8ab5" stroke-width="1.8" stroke-linecap="round"/><text x="137.9" y="373.9" font-size="11" font-weight="700" fill="#ffffff" textLength="43.4" lengthAdjust="spacingAndGlyphs" >Sketch5</text>
<ellipse cx="652.4" cy="472.4" rx="9.8" ry="5.6" fill="#3e4647" fill-opacity="0.55"/><circle cx="652.6" cy="472.3" r="3.9" fill="#050505"/><ellipse cx="999.7" cy="590.2" rx="95" ry="55.5" fill="none" stroke="#62bbe9" stroke-width="1.9"/><circle cx="999.4" cy="590.1" r="3.4" fill="#f4f4f4"/><path d="M862.8 600.8L879.6 599.3M871.8 594.3L885 591M877.8 589.6L890 586M898.3 585.2L910 577M904.3 567.8L912 574" stroke="#5fa8cf" stroke-width="1.3" stroke-opacity="0.8"/><circle cx="862.8" cy="600.8" r="3.3" fill="#566164" stroke="#9aa0a0" stroke-width="0.6" stroke-opacity="0.8"/><circle cx="879.6" cy="599.3" r="3.3" fill="#566164" stroke="#9aa0a0" stroke-width="0.6" stroke-opacity="0.8"/><circle cx="871.8" cy="594.3" r="3.3" fill="#566164" stroke="#9aa0a0" stroke-width="0.6" stroke-opacity="0.8"/><circle cx="885.2" cy="594.9" r="3.3" fill="#566164" stroke="#9aa0a0" stroke-width="0.6" stroke-opacity="0.8"/><circle cx="877.8" cy="589.6" r="3.3" fill="#566164" stroke="#9aa0a0" stroke-width="0.6" stroke-opacity="0.8"/><circle cx="890.9" cy="591.2" r="3.3" fill="#566164" stroke="#9aa0a0" stroke-width="0.6" stroke-opacity="0.8"/><circle cx="898.3" cy="585.2" r="3.3" fill="#566164" stroke="#9aa0a0" stroke-width="0.6" stroke-opacity="0.8"/><circle cx="899.9" cy="571.5" r="3.3" fill="#566164" stroke="#9aa0a0" stroke-width="0.6" stroke-opacity="0.8"/><circle cx="912.4" cy="573.7" r="3.3" fill="#566164" stroke="#9aa0a0" stroke-width="0.6" stroke-opacity="0.8"/><circle cx="904.3" cy="567.8" r="3.3" fill="#566164" stroke="#9aa0a0" stroke-width="0.6" stroke-opacity="0.8"/><circle cx="909.3" cy="576.8" r="3.3" fill="#566164" stroke="#9aa0a0" stroke-width="0.6" stroke-opacity="0.8"/><circle cx="912.4" cy="562.5" r="3.6" fill="#2f3536"/><circle cx="906.1" cy="563.1" r="3.6" fill="#2f3536"/><circle cx="917.4" cy="568.7" r="3.6" fill="#2f3536"/><g transform="translate(889.9 581.5) rotate(-36)"><rect x="-10" y="-6" width="20" height="12" rx="5.5" fill="#d8d8d8"/></g><path d="M884.2 585.8L891.8 578.6L896.8 580.6L886.2 586.6Z" fill="#ff1c1c"/><path d="M884 584.6L891.2 578.3L894.6 579.8L886.4 584.9Z" fill="#3580e6"/><path d="M888.5 582.8L892.6 579.6L894 580.5L889.8 583.4Z" fill="#6d7c8a"/><defs><linearGradient id="cubeg" x1="0" y1="109" x2="0" y2="187" gradientUnits="userSpaceOnUse"><stop offset="0" stop-color="#f0f0f0"/><stop offset="1" stop-color="#d6d6d6"/></linearGradient></defs><path d="M1186 126.9L1224.1 109.4L1247 135.9L1250.6 172.6L1211.1 186.1L1182.4 164.6Z" fill="url(#cubeg)" fill-opacity="0.78"/><path d="M1182.4 164.6L1224.6 148.9L1250.6 172.6L1211.1 186.1Z" fill="#cfcfcf" fill-opacity="0.45"/><path d="M1182.4 164.6L1186 126.9L1224.1 109.4L1247 135.9L1250.6 172.6" fill="none" stroke="#9c9c9c" stroke-width="0.8" stroke-dasharray="3.5 1.2"/><path d="M1224.3 110V148.9L1182.4 164.6M1224.6 148.9L1250.6 172.6" stroke="#a0a0a0" stroke-width="0.7" stroke-dasharray="2.5 1.5" fill="none"/><text x="0" y="0" font-size="10" font-weight="700" fill="#858a91" transform="translate(1191 145.5) rotate(-27) skewX(-7)" textLength="28" lengthAdjust="spacingAndGlyphs">RIGHT</text><text x="0" y="0" font-size="9.5" font-weight="700" fill="#858a91" transform="translate(1201.5 161.5) rotate(38) skewX(-8)" textLength="31" lengthAdjust="spacingAndGlyphs">BOTTOM</text><text x="0" y="0" font-size="8.5" font-weight="700" fill="#858a91" transform="translate(1231.5 133.5) rotate(52) skewX(20)" textLength="14" lengthAdjust="spacingAndGlyphs">TNO</text><path d="M1176.1 163.2L1211.1 186.5" stroke="#f26b6b" stroke-width="2.4"/><path d="M1211.1 186.5L1259.6 172.2" stroke="#8af08a" stroke-width="2.4"/><text x="1166.6" y="164.6" font-size="11.5" fill="#f47c7c" stroke="#f47c7c" stroke-width="0.5">X</text><text x="1261.8" y="174.4" font-size="11.5" fill="#8ee88e" stroke="#8ee88e" stroke-width="0.5">Y</text>
<defs><linearGradient id="lb" x1="0" y1="0" x2="0" y2="1260" gradientUnits="userSpaceOnUse"><stop offset="0" stop-color="#4a4d52"/><stop offset="0.955" stop-color="#4a4d52"/><stop offset="1" stop-color="#20222d"/></linearGradient></defs>
<rect x="0" y="0" width="1" height="48" fill="#9fc6c8"/><rect x="0" y="48" width="1" height="1212" fill="#eaeaea"/>
<rect x="1" y="0" width="1" height="1260" fill="#6c6f74"/><rect x="2" y="0" width="1" height="1260" fill="url(#lb)"/>
<rect x="1280" y="0" width="1" height="1260" fill="#ffffff"/><rect x="1281" y="0" width="1" height="1260" fill="#181a26"/>
<rect x="7" y="1259" width="299" height="1" fill="#ececec"/><rect x="523" y="1259" width="237" height="1" fill="#ececec"/><rect x="309" y="1258" width="1" height="2" fill="#b0b0b0"/><rect x="7" y="1258" width="1" height="2" fill="#b0b0b0"/></svg>
</body></html>
